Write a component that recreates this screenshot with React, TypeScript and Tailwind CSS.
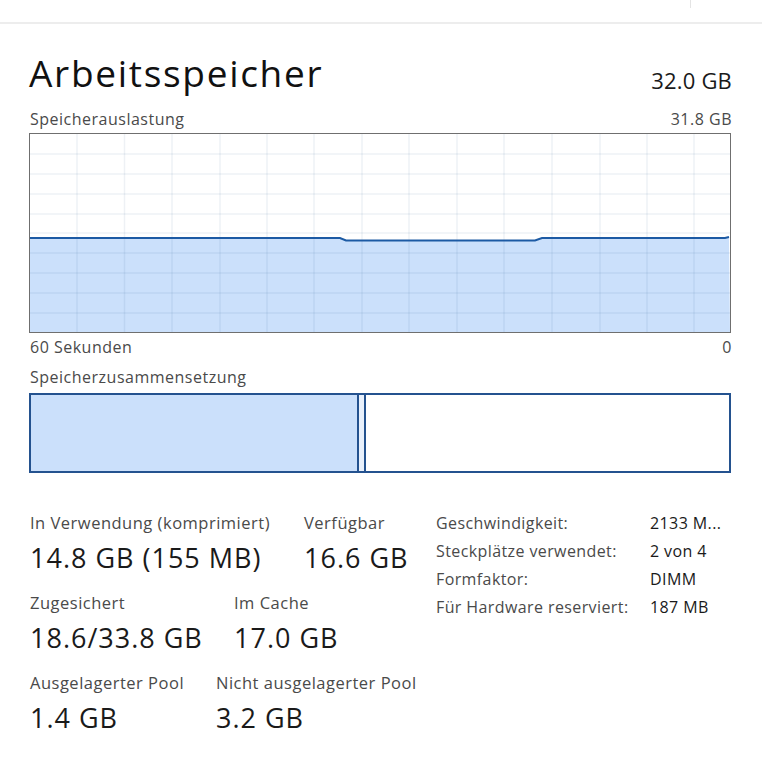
import React from 'react';

const font = { fontFamily: '"Open Sans", "Noto Sans", sans-serif' };

const W = 700;
const H = 198;

function shift(points: string) {
  return points
    .split(' ')
    .map(p => {
      const [x, y] = p.split(',');
      return `${+x + 1},${y}`;
    })
    .join(' ');
}

function UsageChart() {
  const cols = [48, 95.5, 143, 191, 238, 285, 333, 380, 428, 475, 523, 571, 618, 665];
  const rows = [21, 41, 61, 81, 100, 120, 140, 160, 180];
  const line = shift('0,105 310,105 316,107.5 505,107.5 512,105 695,105 699,104');
  return (
    <svg width={W + 2} height={H + 2} className="block">
      <rect x={0.5} y={0.5} width={W + 1} height={H + 1} fill="#fff" stroke="#6f6f6f" />
      <polygon points={`1,${H + 1} ${line} ${W + 1},${H + 1}`} fill="#cbe0fb" />
      {cols.map(x => (
        <line key={x} x1={x} y1={1} x2={x} y2={H + 1} stroke="rgba(20,60,120,0.07)" strokeWidth={1.5} />
      ))}
      {rows.map(y => (
        <line key={y} x1={1} y1={y} x2={W + 1} y2={y} stroke="rgba(20,60,120,0.07)" strokeWidth={1.5} />
      ))}
      <polyline points={line} fill="none" stroke="#1c5aa4" strokeWidth={2} />
      <rect x={0.5} y={0.5} width={W + 1} height={H + 1} fill="none" stroke="#6f6f6f" />
    </svg>
  );
}

function Stat({ label, value, width }: { label: string; value: string; width?: string }) {
  return (
    <div className={width}>
      <div className="text-[16.5px] leading-[20px] tracking-[0.5px] text-[#4a4a4a]">{label}</div>
      <div className="mt-[8px] text-[27px] leading-[34px] tracking-[1px] text-[#1a1a1a]">{value}</div>
    </div>
  );
}

const details = [
  ['Geschwindigkeit:', '2133 M...'],
  ['Steckplätze verwendet:', '2 von 4'],
  ['Formfaktor:', 'DIMM'],
  ['Für Hardware reserviert:', '187 MB'],
];

export default function App() {
  return (
    <div className="w-[762px] h-[768px] bg-white overflow-hidden" style={font}>
      <div className="h-[24px] border-b-2 border-[#ededed] flex justify-end">
        <div className="mr-[71px] w-px h-[8px] bg-[#e4e4e4]" />
      </div>

      <div className="px-[29px]">
        <div className="flex items-end justify-between mt-[25px]">
          <h1 className="text-[37px] font-normal leading-[48px] tracking-[1.7px] text-[#111]">Arbeitsspeicher</h1>
          <span className="text-[22px] leading-[26px] tracking-[0.2px] text-[#1a1a1a] mb-[4px] mr-[1px]">32.0 GB</span>
        </div>

        <div className="flex justify-between mt-[12px] text-[16px] leading-[20px] tracking-[0.5px] text-[#4a4a4a] px-px">
          <span>Speicherauslastung</span>
          <span>31.8 GB</span>
        </div>
        <div className="mt-[4px]">
          <UsageChart />
        </div>
        <div className="flex justify-between text-[16px] leading-[20px] tracking-[0.5px] text-[#4a4a4a] px-px mt-[4px]">
          <span>60 Sekunden</span>
          <span>0</span>
        </div>
        <div className="mt-[10px] text-[16px] leading-[20px] tracking-[0.5px] text-[#4a4a4a] px-px">Speicherzusammensetzung</div>

        <div className="mt-[6px] h-[80px] w-[702px] border-2 border-[#24528f] flex">
          <div className="w-[326px] bg-[#cbe0fb]" />
          <div className="w-[2px] bg-[#24528f]" />
          <div className="w-[5px] bg-[#e9f1fc]" />
          <div className="w-[2px] bg-[#24528f]" />
          <div className="flex-1 bg-white" />
        </div>

        <div className="mt-[40px] flex items-start px-px">
          <div className="w-[406px] flex flex-col gap-[18px]">
            <div className="flex">
              <Stat width="w-[274px]" label="In Verwendung (komprimiert)" value="14.8 GB (155 MB)" />
              <Stat label="Verfügbar" value="16.6 GB" />
            </div>
            <div className="flex">
              <Stat width="w-[204px]" label="Zugesichert" value="18.6/33.8 GB" />
              <Stat label="Im Cache" value="17.0 GB" />
            </div>
            <div className="flex">
              <Stat width="w-[186px]" label="Ausgelagerter Pool" value="1.4 GB" />
              <Stat label="Nicht ausgelagerter Pool" value="3.2 GB" />
            </div>
          </div>
          <div className="-mt-[4px] grid grid-cols-[214px_auto] text-[16px] leading-[28px] tracking-[0.4px]">
            {details.map(([k, v]) => (
              <React.Fragment key={k}>
                <span className="text-[#4a4a4a]">{k}</span>
                <span className="text-[#1a1a1a]">{v}</span>
              </React.Fragment>
            ))}
          </div>
        </div>
      </div>
    </div>
  );
}
